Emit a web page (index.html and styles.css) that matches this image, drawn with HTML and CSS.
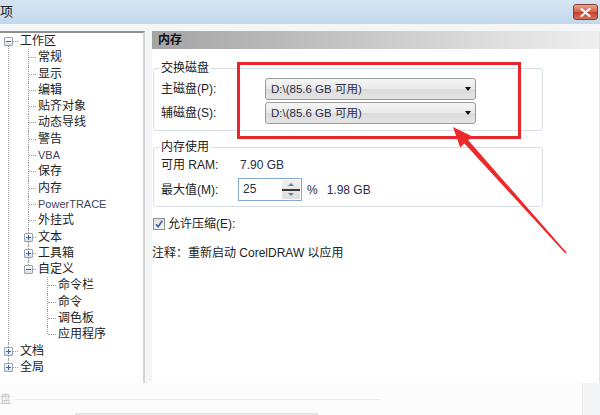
FILE: index.html
```html
<!DOCTYPE html>
<html lang="zh-CN">
<head>
<meta charset="utf-8">
<title>选项</title>
<link rel="stylesheet" href="styles.css">
</head>
<body>
<div class="window">
  <header class="titlebar">
    <span class="title">项</span>
    <button class="close" aria-label="关闭">
      <svg width="11" height="9" viewBox="0 0 11 9"><path d="M1.5 1 L9.5 8 M9.5 1 L1.5 8" stroke="#fff" stroke-width="2.2" stroke-linecap="round"/></svg>
    </button>
  </header>

  <div class="content">
    <nav class="tree-pane">
      <ul class="tree">
        <li class="lv0"><div class="row"><span class="toggle minus"></span>工作区</div>
          <ul>
            <li class="lv1"><div class="row">常规</div></li>
            <li class="lv1"><div class="row">显示</div></li>
            <li class="lv1"><div class="row">编辑</div></li>
            <li class="lv1"><div class="row">贴齐对象</div></li>
            <li class="lv1"><div class="row">动态导线</div></li>
            <li class="lv1"><div class="row">警告</div></li>
            <li class="lv1"><div class="row latin">VBA</div></li>
            <li class="lv1"><div class="row">保存</div></li>
            <li class="lv1"><div class="row">内存</div></li>
            <li class="lv1"><div class="row latin">PowerTRACE</div></li>
            <li class="lv1"><div class="row">外挂式</div></li>
            <li class="lv1"><div class="row"><span class="toggle plus"></span>文本</div></li>
            <li class="lv1"><div class="row"><span class="toggle plus"></span>工具箱</div></li>
            <li class="lv1"><div class="row"><span class="toggle minus"></span>自定义</div>
              <ul>
                <li class="lv2"><div class="row">命令栏</div></li>
                <li class="lv2"><div class="row">命令</div></li>
                <li class="lv2"><div class="row">调色板</div></li>
                <li class="lv2"><div class="row">应用程序</div></li>
              </ul>
            </li>
          </ul>
        </li>
        <li class="lv0"><div class="row"><span class="toggle plus"></span>文档</div></li>
        <li class="lv0"><div class="row"><span class="toggle plus"></span>全局</div></li>
      </ul>
    </nav>

    <section class="panel">
      <h2 class="panel-head">内存</h2>

      <fieldset class="group swap">
        <legend>交换磁盘</legend>
        <div class="frow">
          <span class="lbl">主磁盘(P):</span>
          <div class="select"><span>D:\(85.6 GB 可用)</span><i class="caret"></i></div>
        </div>
        <div class="frow">
          <span class="lbl">辅磁盘(S):</span>
          <div class="select"><span>D:\(85.6 GB 可用)</span><i class="caret"></i></div>
        </div>
      </fieldset>

      <fieldset class="group mem">
        <legend>内存使用</legend>
        <div class="mrow r1">
          <span class="lbl2">可用 RAM:</span>
          <span class="val">7.90 GB</span>
        </div>
        <div class="mrow r2">
          <span class="lbl2">最大值(M):</span>
          <div class="spin">
            <span class="spin-val">25</span>
            <span class="spin-btns">
              <i class="up"></i>
              <i class="sep"></i>
              <i class="down"></i>
            </span>
          </div>
          <span class="pct">%</span>
          <span class="val2">1.98 GB</span>
        </div>
      </fieldset>

      <div class="check-row">
        <span class="cb">
          <svg width="10" height="10" viewBox="0 0 10 10"><path d="M2 5.2 L4.2 7.8 L8.3 1.6" fill="none" stroke="#3b5ea6" stroke-width="1.6" stroke-linejoin="round"/></svg>
        </span>
        <span>允许压缩(E):</span>
      </div>

      <p class="note">注释：重新启动 CorelDRAW 以应用</p>
    </section>
  </div>

  <footer class="footer">
    <div class="footer-row"><span class="ghost">盘</span><span class="fline"></span></div>
    <div class="fline2"></div>
  </footer>

  <div class="highlight"></div>
  <svg class="arrow" width="600" height="415" viewBox="0 0 600 415">
    <polygon points="453,127 472.5,136.4 468.3,140.2 566.6,252.6 565.4,253.4 464.4,143.6 460.2,147.4" fill="#ec2a2c"/>
  </svg>
</div>
</body>
</html>
```

FILE: styles.css
```css
* { box-sizing: border-box; }

html, body { margin: 0; padding: 0; }

body {
  width: 600px;
  height: 415px;
  overflow: hidden;
  background: #fff;
  font-family: "Liberation Sans", "Noto Sans CJK SC", sans-serif;
  font-size: 12px;
  line-height: 16px;
  color: #222;
}

.window {
  position: relative;
  width: 600px;
  height: 415px;
  background: #f4f5f7;
  overflow: hidden;
}

/* title bar */
.titlebar {
  height: 24px;
  display: flex;
  align-items: center;
  justify-content: space-between;
  background: linear-gradient(#d6e5f4, #c3d7ec);
}

.title {
  margin-left: 0;
  font-size: 13px;
  color: #1b1b1b;
}

.close {
  width: 25px;
  height: 16px;
  margin-right: 2px;
  padding: 0;
  display: flex;
  align-items: center;
  justify-content: center;
  border: 1px solid #8d3a2c;
  border-radius: 3px;
  background: linear-gradient(#e9a593, #d4604a 50%, #c2402a 51%, #d6705a);
}

/* content */
.content {
  display: flex;
  height: 359px;
  padding-top: 7px;
}

.tree-pane {
  width: 145px;
  height: 352px;
  background: #fff;
  border-top: 2px solid #8e8e8e;
  border-right: 2px solid #d4d4d4;
  overflow: hidden;
}

/* tree */
.tree, .tree ul {
  list-style: none;
  margin: 0;
  padding: 0;
}

.tree li { position: relative; }

.tree li::before {
  content: "";
  position: absolute;
  top: 0;
  bottom: 0;
  border-left: 1px dotted #9c9c9c;
}

.tree li:last-child::before {
  bottom: auto;
  height: 8px;
}

.tree > li:first-child::before { top: 8px; }

.lv0::before { left: 8px; }
.lv1::before { left: 28px; }
.lv2::before { left: 47px; }

.row {
  position: relative;
  height: 16.3px;
  line-height: 16.3px;
  white-space: nowrap;
  color: #222;
}

.row.latin { font-size: 11px; color: #3b4560; }

.lv0 > .row { padding-left: 20px; }
.lv1 > .row { padding-left: 38px; }
.lv2 > .row { padding-left: 58px; }

.row::before {
  content: "";
  position: absolute;
  top: 8px;
  border-top: 1px dotted #9c9c9c;
}

.lv0 > .row::before { left: 9px; width: 9px; }
.lv1 > .row::before { left: 29px; width: 7px; }
.lv2 > .row::before { left: 48px; width: 8px; }

.toggle {
  position: absolute;
  top: 4px;
  width: 9px;
  height: 9px;
  border: 1px solid #97a3b3;
  border-radius: 1px;
  background: linear-gradient(#ffffff, #dde2ea);
  z-index: 1;
}

.lv0 > .row .toggle { left: 4px; }
.lv1 > .row .toggle { left: 24px; }

.toggle::before {
  content: "";
  position: absolute;
  left: 1px;
  top: 3px;
  width: 5px;
  height: 1px;
  background: #3c62b4;
}

.toggle.plus::after {
  content: "";
  position: absolute;
  left: 3px;
  top: 1px;
  width: 1px;
  height: 5px;
  background: #3c62b4;
}

/* right panel */
.panel {
  flex: 1;
  height: 352px;
  margin-left: 7px;
  background: #fff;
  border-right: 1px solid #e4e4e4;
}

.panel-head {
  margin: 0;
  height: 18px;
  line-height: 18px;
  padding-left: 6px;
  font-size: 12px;
  font-weight: bold;
  color: #111;
  background: linear-gradient(to right, #a4a4a4, #c6c6c6 45%, #e4e4e4 85%, #efefef);
}

.group {
  width: 390px;
  margin: 11px 0 0 1px;
  padding: 2px 6px 6px 7px;
  border: 1px solid #d6dde6;
  border-radius: 3px;
  min-width: 0;
}

.group legend {
  padding: 0 2px;
  margin-left: -2px;
  line-height: 16px;
  color: #222;
}

.frow {
  display: flex;
  align-items: center;
  height: 22px;
}

.frow + .frow { margin-top: 2px; }

.lbl { width: 104px; }

.select {
  width: 211px;
  height: 22px;
  display: flex;
  align-items: center;
  justify-content: space-between;
  padding: 0 4px 0 5px;
  border: 1px solid #999;
  border-radius: 3px;
  background: linear-gradient(#f5f5f5, #e9e9e9 50%, #dcdcdc 51%, #e4e4e4);
  color: #2a2e48;
  font-size: 11.5px;
}

.caret {
  width: 0;
  height: 0;
  border-left: 3.5px solid transparent;
  border-right: 3.5px solid transparent;
  border-top: 4px solid #111;
}

.group.mem {
  margin-top: 8px;
  padding: 0 6px 5px 7px;
}

.mrow {
  display: flex;
  align-items: center;
}

.r1 { height: 20px; }
.r2 { height: 23px; margin-top: 3px; }

.lbl2 { width: 77px; }

.val { margin-left: 2px; color: #2a2e48; }

.spin {
  width: 64px;
  height: 23px;
  display: flex;
  border: 1px solid #86a8d2;
  background: #fff;
}

.spin-val {
  flex: 1;
  padding-left: 4px;
  line-height: 21px;
  color: #2a2e48;
}

.spin-btns {
  width: 18px;
  margin: 1px;
  display: flex;
  flex-direction: column;
  align-items: center;
  justify-content: space-between;
  padding: 3px 0 3px;
  background: linear-gradient(#f0f0f0, #dedede);
}

.spin-btns .up {
  width: 0; height: 0;
  border-left: 3px solid transparent;
  border-right: 3px solid transparent;
  border-bottom: 3px solid #6a7fa8;
}

.spin-btns .down {
  width: 0; height: 0;
  border-left: 3px solid transparent;
  border-right: 3px solid transparent;
  border-top: 3px solid #6a7fa8;
}

.spin-btns .sep {
  width: 18px;
  height: 2px;
  background: #3a3a3a;
}

.pct { margin-left: 5px; color: #2a2e48; }
.val2 { margin-left: 9px; color: #2a2e48; }

.check-row {
  display: flex;
  align-items: center;
  height: 12px;
  margin: 11px 0 0 1px;
}

.cb {
  width: 12px;
  height: 12px;
  margin-right: 3px;
  display: flex;
  align-items: center;
  justify-content: center;
  border: 1px solid #8e8f8f;
  background: linear-gradient(#dedede, #f8f8f8);
}

.note {
  margin: 15px 0 0 0;
  line-height: 16px;
}

/* footer */
.footer {
  width: 583px;
  height: 32px;
  padding-top: 9px;
  background: #fcfcfc;
  border-right: 1px solid #ececec;
}

.footer-row {
  display: flex;
  align-items: center;
  height: 14px;
}

.ghost {
  margin-left: 0;
  color: #c6c6c6;
  font-size: 11px;
}

.fline {
  width: 366px;
  height: 1px;
  margin-left: 4px;
  background: #ececec;
}

.fline2 {
  width: 243px;
  height: 2px;
  margin: 7px 0 0 75px;
  background: #e4e4e4;
}

/* annotations */
.highlight {
  position: absolute;
  left: 237px;
  top: 62px;
  width: 284px;
  height: 77px;
  border: 3px solid #e8262b;
}

.arrow {
  position: absolute;
  left: 0;
  top: 0;
  pointer-events: none;
}
```
